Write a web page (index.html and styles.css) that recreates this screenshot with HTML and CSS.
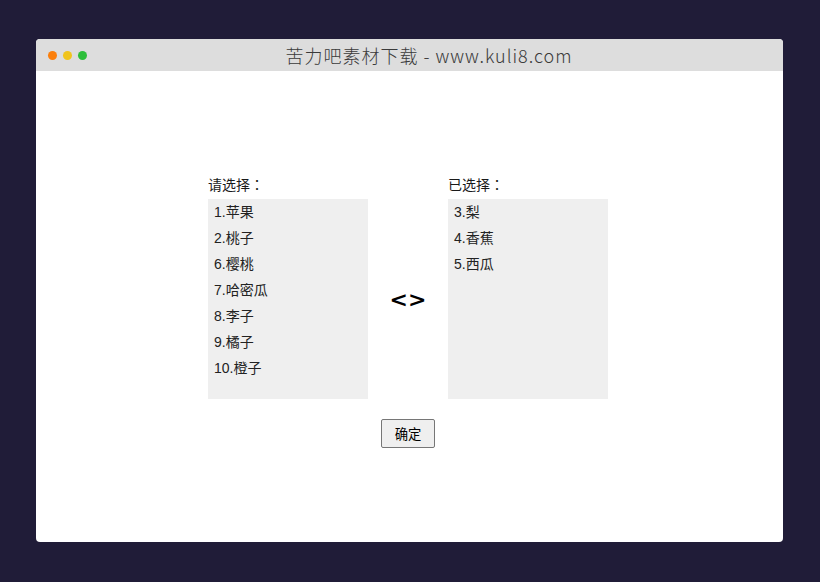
FILE: index.html
```html
<!DOCTYPE html>
<html lang="zh-CN">
<head>
<meta charset="utf-8">
<title>苦力吧素材下载</title>
<link rel="stylesheet" href="styles.css">
</head>
<body>
<div class="window">
  <div class="titlebar">
    <div class="dots">
      <span class="dot dot-orange"></span>
      <span class="dot dot-yellow"></span>
      <span class="dot dot-green"></span>
    </div>
    <div class="title">苦力吧素材下载 - www.kuli8.com</div>
  </div>
  <div class="content">
    <div class="picker">
      <div class="column">
        <div class="label">请选择<span class="colon" lang="zh-TW">：</span></div>
        <ul class="list">
          <li>1.苹果</li>
          <li>2.桃子</li>
          <li>6.樱桃</li>
          <li>7.哈密瓜</li>
          <li>8.李子</li>
          <li>9.橘子</li>
          <li>10.橙子</li>
        </ul>
      </div>
      <div class="arrows">&lt;&gt;</div>
      <div class="column">
        <div class="label">已选择<span class="colon" lang="zh-TW">：</span></div>
        <ul class="list">
          <li>3.梨</li>
          <li>4.香蕉</li>
          <li>5.西瓜</li>
        </ul>
      </div>
    </div>
    <button class="confirm" type="button">确定</button>
  </div>
</div>
</body>
</html>
```

FILE: styles.css
```css
html, body {
  margin: 0;
  padding: 0;
}

body {
  background: #201c38;
  width: 820px;
  height: 582px;
  padding: 39px 37px 0 36px;
  box-sizing: border-box;
  font-family: "Liberation Sans", "Noto Sans CJK SC", sans-serif;
}

.window {
  width: 747px;
  height: 503px;
  background: #ffffff;
  border-radius: 4px;
  overflow: hidden;
  display: flex;
  flex-direction: column;
}

.titlebar {
  height: 32px;
  flex: none;
  background: #dddddd;
  display: flex;
  align-items: center;
  padding-left: 12px;
}

.dots {
  display: flex;
  gap: 6px;
}

.dot {
  width: 9px;
  height: 9px;
  border-radius: 50%;
  display: block;
}

.dot-orange { background: #fb7f0c; }
.dot-yellow { background: #f0c41d; }
.dot-green { background: #2dbe3a; }

.title {
  flex: 1;
  text-align: center;
  padding-right: 12px;
  font-family: "Noto Sans CJK SC", sans-serif;
  font-weight: 300;
  font-size: 18px;
  letter-spacing: 1px;
  line-height: 32px;
  color: #3a3a3a;
}

.content {
  flex: 1;
  display: flex;
  flex-direction: column;
  align-items: center;
  padding-top: 104px;
  padding-right: 3px;
}

.picker {
  display: flex;
  align-items: flex-end;
}

.column {
  width: 160px;
}

.label {
  font-size: 14px;
  line-height: 20px;
  height: 20px;
  margin-bottom: 4px;
  color: #1a1a1a;
}

.colon {
  font-family: "Noto Sans CJK TC", sans-serif;
  line-height: 1;
}

.list {
  list-style: none;
  margin: 0;
  padding: 0 0 0 6px;
  height: 200px;
  box-sizing: border-box;
  background: #efefef;
}

.list li {
  font-size: 14px;
  line-height: 26px;
  color: #222222;
}

.arrows {
  width: 80px;
  height: 200px;
  display: flex;
  align-items: center;
  justify-content: center;
  font-family: "DejaVu Sans", sans-serif;
  font-weight: bold;
  font-size: 22px;
  color: #000000;
}

.confirm {
  margin-top: 20px;
  width: 54px;
  height: 29px;
  padding: 0;
  background: #efefef;
  border: 1px solid #767676;
  border-radius: 2px;
  font-family: "Liberation Sans", "Noto Sans CJK SC", sans-serif;
  font-size: 13.33px;
  color: #000000;
}
```
